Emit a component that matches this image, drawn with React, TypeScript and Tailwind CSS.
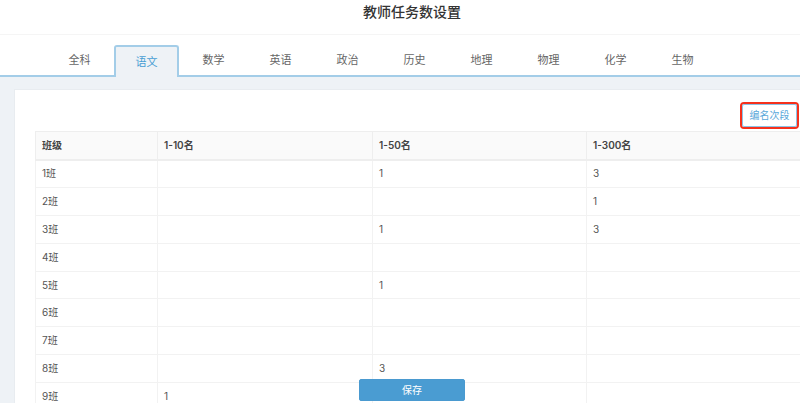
import React from 'react';

const subjects = ['全科', '语文', '数学', '英语', '政治', '历史', '地理', '物理', '化学', '生物'];

const rows = [
  ['1班', '', '1', '3'],
  ['2班', '', '', '1'],
  ['3班', '', '1', '3'],
  ['4班', '', '', ''],
  ['5班', '', '1', ''],
  ['6班', '', '', ''],
  ['7班', '', '', ''],
  ['8班', '', '3', ''],
  ['9班', '1', '', ''],
];

const headers = ['班级', '1-10名', '1-50名', '1-300名'];
const widths = ['w-[122px]', 'w-[215px]', 'w-[214px]', 'w-[214px]'];

export default function App() {
  return (
    <div className="relative h-[403px] w-[800px] overflow-hidden bg-white font-['Inter','Noto_Sans_CJK_SC',sans-serif] text-[10px] text-[#555]">
      <div className="flex h-[35px] items-start justify-center border-b border-[#f5f5f5] pt-[2px] pl-[24px]">
        <h1 className="text-[14px] leading-5 font-medium text-[#333]">教师任务数设置</h1>
      </div>

      <div className="flex h-[42px] items-end border-b-2 border-[#a3cde8] pl-[47px]">
        {subjects.map((s, i) =>
          i === 1 ? (
            <div
              key={s}
              className="relative -mb-[2px] mr-[2px] flex h-[32px] w-[65px] items-center justify-center rounded-t-[3px] border-2 border-b-0 border-[#a3cde8] bg-[#eef2f6] pt-[1px] text-[11px] text-[#4a9fd4]"
            >
              {s}
            </div>
          ) : (
            <div key={s} className="mr-[2px] flex h-[30px] w-[65px] items-center justify-center pt-[1px] text-[11px] text-[#666]">
              {s}
            </div>
          ),
        )}
      </div>

      <div className="h-[326px] bg-[#eef2f6] pt-[12px] pl-[14px]">
        <div className="h-full border-t border-l border-[#e8ecf0] bg-white pt-[12px] pl-[20px]">
          <div className="flex h-[29px] justify-end">
            <div className="mr-[1px] h-[27px] rounded-[4px] border-2 border-[#f5301c]">
              <button className="h-[23px] w-[55px] rounded-[2px] border border-[#8cc3e6] bg-white text-[10px] text-[#5aa8da]">编名次段</button>
            </div>
          </div>

          <table className="w-[765px] table-fixed border-collapse">
            <thead>
              <tr className="h-[28px] border-b-2 border-[#eeeeee] bg-[#fafafa]">
                {headers.map((h, i) => (
                  <th key={h} className={`${widths[i]} border border-b-0 border-[#eeeeee] px-[6px] text-left text-[10px] font-semibold text-[#444]`}>
                    {h}
                  </th>
                ))}
              </tr>
            </thead>
            <tbody>
              {rows.map((row) => (
                <tr key={row[0]} className="h-[27.9px] border-b border-[#f2f2f2]">
                  {row.map((cell, i) => (
                    <td key={i} className="border-x border-[#f2f2f2] px-[6px] text-[10px] text-[#555]">
                      {cell}
                    </td>
                  ))}
                </tr>
              ))}
            </tbody>
          </table>
        </div>
      </div>

      <button className="absolute top-[379px] left-[359px] h-[22px] w-[106px] rounded-[2px] border border-[#4a9ad0] bg-[#4a9cd2] text-[10px] text-white">
        保存
      </button>
    </div>
  );
}
